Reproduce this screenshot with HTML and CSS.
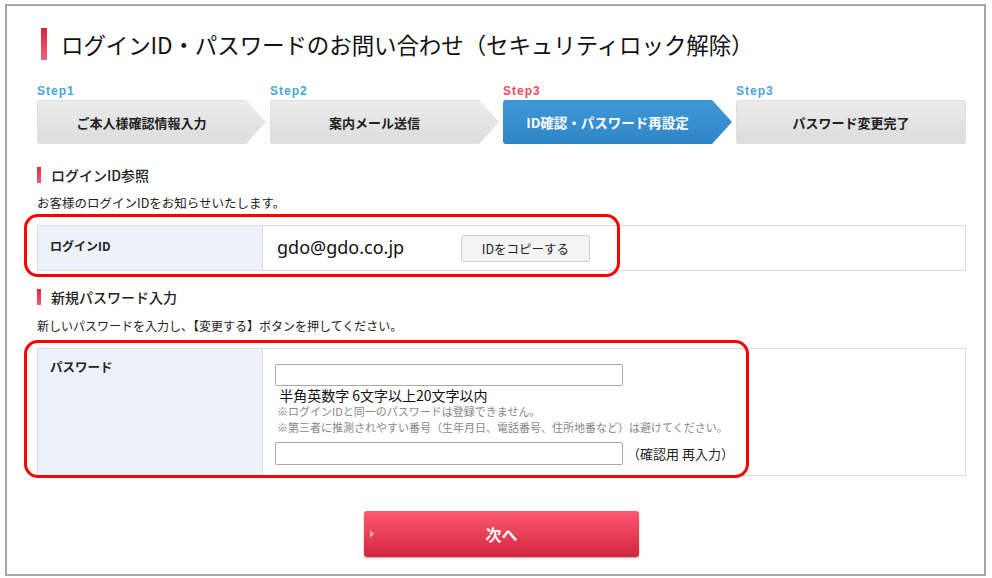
FILE: index.html
```html
<!DOCTYPE html>
<html lang="ja">
<head>
<meta charset="utf-8">
<title>ログインID・パスワードのお問い合わせ</title>
<link rel="stylesheet" href="styles.css">
</head>
<body>
<div class="frame">
  <h1 class="title">ログインID・パスワードのお問い合わせ（セキュリティロック解除）</h1>

  <ol class="steps">
    <li class="step">
      <span class="step-label">Step1</span>
      <span class="step-box arrow"><span>ご本人様確認情報入力</span></span>
    </li>
    <li class="step">
      <span class="step-label">Step2</span>
      <span class="step-box arrow"><span>案内メール送信</span></span>
    </li>
    <li class="step current">
      <span class="step-label">Step3</span>
      <span class="step-box arrow"><span>ID確認・パスワード再設定</span></span>
    </li>
    <li class="step">
      <span class="step-label">Step3</span>
      <span class="step-box"><span>パスワード変更完了</span></span>
    </li>
  </ol>

  <h2 class="sec">ログインID参照</h2>
  <p class="lead lead1">お客様のログインIDをお知らせいたします。</p>
  <div class="tbl-wrap tbl1">
    <div class="tbl">
      <div class="th">ログインID</div>
      <div class="td id-cell">
        <span class="login-id">gdo@gdo.co.jp</span>
        <button class="copy-btn" type="button">IDをコピーする</button>
      </div>
    </div>
    <div class="mark mark1"></div>
  </div>

  <h2 class="sec sec2">新規パスワード入力</h2>
  <p class="lead lead2">新しいパスワードを入力し、【変更する】ボタンを押してください。</p>
  <div class="tbl-wrap tbl2">
    <div class="tbl">
      <div class="th">パスワード</div>
      <div class="td pw-cell">
        <input class="pw" type="password">
        <div class="hint">&nbsp;半角英数字 6文字以上20文字以内</div>
        <div class="note">※ログインIDと同一のパスワードは登録できません。</div>
        <div class="note">※第三者に推測されやすい番号（生年月日、電話番号、住所地番など）は避けてください。</div>
        <div class="confirm-row">
          <input class="pw" type="password">
          <span class="confirm-label">（確認用 再入力）</span>
        </div>
      </div>
    </div>
    <div class="mark mark2"></div>
  </div>

  <div class="actions">
    <button class="next-btn" type="button"><span class="tri"></span>次へ</button>
  </div>
</div>
</body>
</html>
```

FILE: styles.css
```css
* { box-sizing: border-box; }
html, body { margin: 0; padding: 0; background: #fff; }
body {
  font-family: "Noto Sans CJK JP", "Noto Sans", sans-serif;
  color: #222;
}
.frame {
  margin: 4px 0 0 5px;
  width: 981px;
  height: 572px;
  border: 2px solid #a6a6a6;
  padding: 22px 18px 0 30px;
}
.title {
  margin: 0 0 0 4px;
  height: 32px;
  display: flex;
  align-items: center;
  font-size: 22.5px;
  font-weight: 400;
  color: #111;
  letter-spacing: -0.1px;
}
.title::before {
  content: "";
  width: 6px;
  height: 32px;
  margin-right: 14px;
  background: linear-gradient(#dc2438, #f4607c);
}
.steps {
  list-style: none;
  margin: 24px 0 0;
  padding: 0;
  display: grid;
  grid-template-columns: 229px 229px 229px 1fr;
  column-gap: 4px;
}
.step { display: flex; flex-direction: column; }
.step-label {
  font-family: "Liberation Sans", Arial, sans-serif;
  font-weight: 700;
  font-size: 12px;
  line-height: 14px;
  letter-spacing: 1px;
  color: #49a3de;
  height: 16px;
}
.step.current .step-label { color: #ee4a63; }
.step-box {
  height: 44px;
  background: linear-gradient(#ececec, #dcdcdc);
  border-radius: 3px;
  display: flex;
  align-items: center;
  justify-content: center;
  font-size: 13px;
  font-weight: 700;
  color: #222;
  box-shadow: inset 0 0 0 1px #e0e0e0;
}
.step-box.arrow {
  padding-right: 20px;
  clip-path: polygon(0 0, calc(100% - 20px) 0, 100% 50%, calc(100% - 20px) 100%, 0 100%);
}
.step.current .step-box {
  background: linear-gradient(#3e98d8, #2f86c6);
  color: #fff;
  box-shadow: none;
  font-size: 13.5px;
}
.sec {
  margin: 22px 0 0;
  font-size: 14px;
  font-weight: 500;
  line-height: 18px;
  display: flex;
  align-items: center;
  color: #222;
}
.sec::before {
  content: "";
  width: 4px;
  height: 16px;
  margin-right: 10px;
  background: linear-gradient(#e02a3e, #f15a76);
}
.sec2 { margin-top: 17px; }
.lead {
  margin: 10px 0 0;
  font-size: 12.5px;
  line-height: 18px;
  color: #222;
}
.lead2 { margin-top: 11px; font-size: 12px; }
.tbl-wrap { position: relative; margin-top: 13px; }
.tbl {
  display: grid;
  grid-template-columns: 225px 1fr;
  border: 1px solid #dcdcdc;
}
.th {
  background: #edf1f9;
  border-right: 1px solid #dcdcdc;
  padding: 11px 12px;
  font-size: 12px;
  font-weight: 700;
  line-height: 18px;
}
.tbl2 .th { padding-top: 9px; font-size: 12.5px; }
.td { padding: 0 12px; }
.id-cell {
  height: 44px;
  display: flex;
  align-items: center;
  padding-left: 14px;
}
.login-id {
  font-family: "Noto Sans", "Open Sans", sans-serif;
  font-size: 18px;
  color: #111;
  width: 184px;
  margin-top: -3px;
}
.copy-btn {
  font-family: "Noto Sans CJK JP", sans-serif;
  width: 129px;
  height: 27px;
  background: #f4f4f4;
  border: 1px solid #cfcfcf;
  border-radius: 3px;
  font-size: 12.5px;
  color: #222;
  padding: 0;
  margin-top: 1px;
}
.pw-cell { padding-top: 15px; padding-bottom: 10px; }
.pw {
  display: block;
  width: 348px;
  height: 22px;
  border: 1px solid #a9a9a9;
  border-radius: 2px;
  background: #fff;
  margin: 0;
}
.hint {
  font-size: 14px;
  line-height: 16px;
  margin: 1px 0 0 1px;
  color: #111;
}
.note {
  font-size: 11px;
  line-height: 16px;
  color: #888;
  margin-left: 2px;
}
.confirm-row {
  display: flex;
  align-items: center;
  margin-top: 7px;
}
.confirm-row .pw { height: 23px; }
.confirm-label {
  font-size: 13px;
  color: #222;
  margin-left: 4px;
}
.mark {
  position: absolute;
  border: 3px solid #f00;
  border-radius: 14px;
  pointer-events: none;
}
.mark1 { left: -13px; top: -11px; width: 596px; height: 63px; }
.mark2 { left: -13px; top: -8px; width: 725px; height: 138px; }
.actions {
  display: flex;
  justify-content: center;
  margin-top: 35px;
}
.next-btn {
  position: relative;
  width: 275px;
  height: 46px;
  border: none;
  border-radius: 3px;
  background: linear-gradient(#fb5a70, #d3263e);
  box-shadow: 0 1px 2px rgba(0,0,0,0.35);
  color: #fff;
  font-family: "Noto Sans CJK JP", sans-serif;
  font-weight: 700;
  font-size: 16px;
  padding: 0;
}
.tri {
  position: absolute;
  left: 6px;
  top: 19px;
  width: 0;
  height: 0;
  border-left: 4px solid #f6a7b2;
  border-top: 4px solid transparent;
  border-bottom: 4px solid transparent;
}
```
